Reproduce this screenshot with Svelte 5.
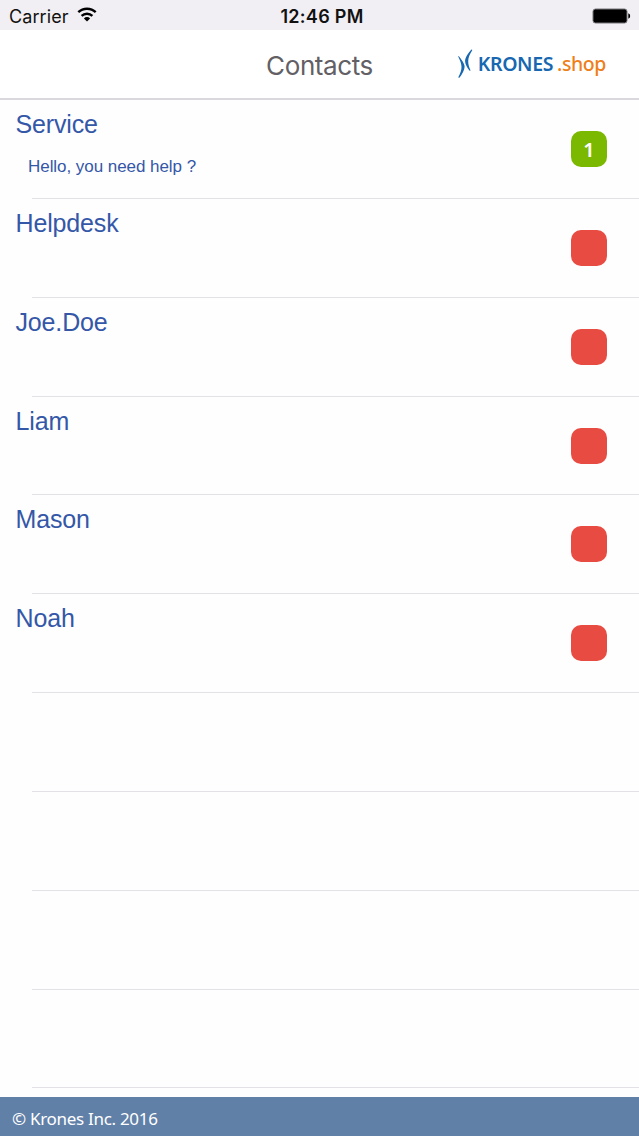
<script>
  const contacts = [
    { name: 'Service', message: 'Hello, you need help ?', unread: 1, online: true },
    { name: 'Helpdesk' },
    { name: 'Joe.Doe' },
    { name: 'Liam' },
    { name: 'Mason' },
    { name: 'Noah' }
  ];
  const emptyRows = [0, 1, 2, 3];
</script>

<div class="screen">
  <div class="status-bar">
    <div class="carrier">
      <span>Carrier</span>
      <svg class="wifi" viewBox="0 0 20 15" width="20" height="15">
        <path d="M1.3 5.2 A12.6 12.6 0 0 1 18.7 5.2" />
        <path d="M4.6 8.9 A7.8 7.8 0 0 1 15.4 8.9" />
        <path class="dot" d="M6.9 11.4 A4.3 4.3 0 0 1 13.1 11.4 L10 14.6 Z" />
      </svg>
    </div>
    <span class="time">12:46 PM</span>
    <div class="battery-wrap">
      <svg viewBox="0 0 40 17" width="40" height="17">
        <rect x="1" y="1" width="34" height="14" rx="2.5" fill="#000" stroke="#77757a" stroke-width="1" />
        <path d="M36.3 5.3 Q38.2 6 38.2 8 Q38.2 10 36.3 10.7 Z" fill="#000" />
      </svg>
    </div>
  </div>

  <header class="nav">
    <h1>Contacts</h1>
    <div class="logo">
      <svg viewBox="0 0 16 30" width="16" height="30">
        <path d="M1.6 7 C4.6 10.6 7.6 14.6 7.6 17.8 C7.6 21.2 5.2 25 2.4 28.8 L1.2 28.4 C3.6 23.8 4.6 20.6 4.5 17.8 C4.4 14.6 3 11.2 1.2 7.6 Z" />
        <path d="M14.4 0.4 L15.4 1 C12.8 5 11.2 8.6 11.2 12.2 C11.2 15 12 18 13.6 21.4 L12.6 21.8 C10.2 18.6 8.2 15.6 8.1 12.2 C8 8.6 11 4.4 14.4 0.4 Z" />
      </svg>
      <span class="brand">KRONES</span>
      <span class="shop">.shop</span>
    </div>
  </header>

  <ul class="list">
    {#each contacts as contact}
      <li>
        <div class="info">
          <h2>{contact.name}</h2>
          {#if contact.message}
            <p>{contact.message}</p>
          {/if}
        </div>
        <span class="badge" class:online={contact.online}>{contact.unread ?? ''}</span>
      </li>
    {/each}
    {#each emptyRows as row (row)}
      <li></li>
    {/each}
  </ul>

  <footer>© Krones Inc. 2016</footer>
</div>

<style>
:global(body) {
  background: #fefefe;
}

.screen {
  display: flex;
  flex-direction: column;
  width: 100%;
  height: 1136px;
  overflow: hidden;
  background: #fefefe;
  font-family: "Liberation Sans", Arial, sans-serif;
}

/* STATUS BAR */
.status-bar {
  display: grid;
  grid-template-columns: 1fr auto 1fr;
  align-items: center;
  flex: none;
  box-sizing: border-box;
  height: 30px;
  padding: 2px 7px 0 9px;
  background: #f1eff3;
  color: #111;
  font-family: Inter, sans-serif;
  font-size: 18px;
}

.carrier {
  display: flex;
  align-items: center;
  gap: 8px;
  letter-spacing: 0.1px;
}

.wifi {
  margin-top: -3px;
  fill: none;
  stroke: #000;
  stroke-width: 2.4;
}

.wifi .dot {
  fill: #000;
  stroke: none;
}

.time {
  margin-left: 3px;
  font-weight: 600;
  letter-spacing: 0.3px;
}

.battery-wrap {
  display: flex;
  justify-content: flex-end;
}

/* HEADER */
.nav {
  display: grid;
  grid-template-columns: 1fr auto 1fr;
  align-items: center;
  flex: none;
  box-sizing: border-box;
  height: 70px;
  padding: 0 33px;
  border-bottom: 2px solid #dad8dc;
  background: #fff;
}

.nav h1 {
  grid-column: 2;
  margin: 3px 0 0;
  color: #626064;
  font-family: Inter, sans-serif;
  font-size: 26px;
  font-weight: 400;
  line-height: 32px;
  letter-spacing: -0.4px;
}

.logo {
  display: flex;
  align-items: center;
  justify-content: flex-end;
  font-family: "Noto Sans", "Open Sans", sans-serif;
  font-size: 19.5px;
  line-height: 30px;
}

.logo svg {
  margin-right: 5px;
  fill: #1767b1;
}

.brand {
  margin-right: 4px;
  color: #1767b1;
  font-weight: 600;
  letter-spacing: -0.4px;
}

.shop {
  color: #ee7f1a;
  font-weight: 500;
  letter-spacing: -0.4px;
}

/* CONTACTS */
.list {
  flex: 1;
  min-height: 0;
  margin: 0;
  padding: 0;
  list-style: none;
}

.list li {
  display: flex;
  justify-content: space-between;
  box-sizing: border-box;
  height: 98.85px;
  padding: 0 32px 0 15.5px;
  background: linear-gradient(#e3e1e6, #e3e1e6) 32px 100% / 100% 1px no-repeat;
}

.info h2 {
  margin: 9px 0 0;
  color: #3457a8;
  font-size: 25px;
  font-weight: 400;
  line-height: 30px;
  letter-spacing: -0.15px;
}

.info p {
  margin: 17px 0 0 12.5px;
  color: #3457a8;
  font-size: 17px;
  line-height: 22px;
  letter-spacing: -0.05px;
}

.badge {
  width: 36px;
  height: 36px;
  margin-top: 31px;
  border-radius: 10px;
  background: #e84b42;
  color: #fff;
  font-family: "Noto Sans", sans-serif;
  font-size: 20px;
  font-weight: 600;
  line-height: 37px;
  text-align: center;
}

.badge.online {
  background: #7bb800;
}

/* FOOTER */
footer {
  flex: none;
  box-sizing: border-box;
  height: 39px;
  padding: 4px 12px 0;
  background: #6180a8;
  color: #fff;
  font-family: "Noto Sans", "Open Sans", sans-serif;
  font-size: 17px;
  line-height: 36px;
  letter-spacing: -0.3px;
}
</style>
